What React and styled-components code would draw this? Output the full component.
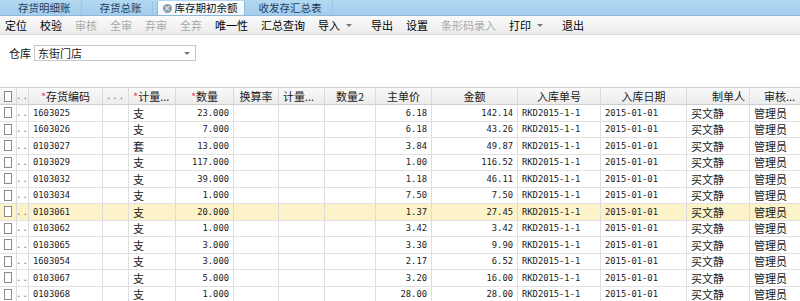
import React from "react";
import styled, { createGlobalStyle } from "styled-components";

const GlobalStyle = createGlobalStyle`
  html, body {
    margin: 0;
    padding: 0;
    background: #ffffff;
  }
  body {
    font-family: "Noto Sans CJK SC", "Noto Sans", sans-serif;
    font-size: 11px;
    color: #1a1a1a;
  }
`;

const tabs = [
  { label: "存货明细账" },
  { label: "存货总账" },
  { label: "库存期初余额", active: true },
  { label: "收发存汇总表" },
];

const tools = [
  { label: "定位" },
  { label: "校验" },
  { label: "审核", off: true },
  { label: "全审", off: true },
  { label: "弃审", off: true },
  { label: "全弃", off: true },
  { label: "唯一性" },
  { label: "汇总查询" },
  { label: "导入", menu: true },
  { label: "导出" },
  { label: "设置" },
  { label: "条形码录入", off: true },
  { label: "打印", menu: true },
  { label: "退出" },
];

// width, align of each column
const cols = [
  { w: 17, a: "center" },
  { w: 12, a: "center" },
  { w: 74, a: "left" },
  { w: 26, a: "center" },
  { w: 47, a: "left" },
  { w: 58, a: "right" },
  { w: 45, a: "center" },
  { w: 46, a: "left" },
  { w: 51, a: "center" },
  { w: 56, a: "right" },
  { w: 86, a: "right" },
  { w: 83, a: "left" },
  { w: 86, a: "left" },
  { w: 63, a: "left" },
  { w: 60, a: "left" },
];

const gridCols = cols.map((c) => c.w + "px").join(" ");

const heads = [
  { t: "chk" },
  { t: ".." },
  { t: "存货编码", req: true, a: "center" },
  { t: "..." },
  { t: "计量...", req: true, a: "left" },
  { t: "数量", req: true, a: "center" },
  { t: "换算率", a: "center" },
  { t: "计量...", a: "left" },
  { t: "数量2", a: "center" },
  { t: "主单价", a: "center" },
  { t: "金额", a: "center" },
  { t: "入库单号", a: "center" },
  { t: "入库日期", a: "center" },
  { t: "制单人", a: "right" },
  { t: "审核...", a: "center" },
];

const rows = [
  ["1603025", "支", "23.000", "6.18", "142.14"],
  ["1603026", "支", "7.000", "6.18", "43.26"],
  ["0103027", "套", "13.000", "3.84", "49.87"],
  ["0103029", "支", "117.000", "1.00", "116.52"],
  ["0103032", "支", "39.000", "1.18", "46.11"],
  ["0103034", "支", "1.000", "7.50", "7.50"],
  ["0103061", "支", "20.000", "1.37", "27.45", true],
  ["0103062", "支", "1.000", "3.42", "3.42"],
  ["0103065", "支", "3.000", "3.30", "9.90"],
  ["1603054", "支", "3.000", "2.17", "6.52"],
  ["0103067", "支", "5.000", "3.20", "16.00"],
  ["0103068", "支", "1.000", "28.00", "28.00"],
];

const Page = styled.div`
  width: 800px;
  height: 301px;
  overflow: hidden;
  background: #ffffff;
`;

const TabBar = styled.div`
  height: 15px;
  display: flex;
  align-items: flex-end;
  background: linear-gradient(#b3d8f2, #a3cdeb);
  border-bottom: 1px solid #8fb8d8;
  padding-left: 4px;
`;

const Tab = styled.div`
  height: 14px;
  display: flex;
  align-items: center;
  gap: 3px;
  padding: 0 ${(p) => (p.$active ? "6px" : "10px")} 0 ${(p) => (p.$active ? "5px" : "14px")};
  margin-right: ${(p) => (p.$active ? "0" : "4px")};
  font-size: 10.5px;
  line-height: 14px;
  color: ${(p) => (p.$active ? "#111" : "#1e3c5c")};
  background: ${(p) => (p.$active ? "linear-gradient(#ffffff, #eef5fb)" : "transparent")};
  border-right: 1px solid ${(p) => (p.$active ? "#8fb8d8" : "#9cc3e0")};
  border-left: ${(p) => (p.$active ? "1px solid #8fb8d8" : "none")};
`;

const CloseDot = styled.span`
  width: 9px;
  height: 9px;
  border-radius: 50%;
  background: #8b9bab;
  color: #fff;
  font-size: 8px;
  line-height: 9px;
  text-align: center;
  font-family: "DejaVu Sans", sans-serif;
`;

const Toolbar = styled.div`
  height: 18px;
  display: flex;
  align-items: center;
  gap: 13px;
  padding-left: 5px;
  background: linear-gradient(#fbfbfb, #ececec);
  border-bottom: 1px solid #dadada;
`;

const Tool = styled.span`
  display: flex;
  align-items: center;
  font-size: 11px;
  color: ${(p) => (p.$off ? "#a9a9a9" : "#000")};
  margin-right: ${(p) => (p.$menu ? "6px" : "0")};
`;

const Caret = styled.span`
  margin-left: 6px;
  width: 0;
  height: 0;
  border-left: 3px solid transparent;
  border-right: 3px solid transparent;
  border-top: 3px solid #777;
`;

const FilterRow = styled.div`
  display: flex;
  align-items: center;
  gap: 3px;
  padding: 10px 0 0 9px;
`;

const Label = styled.span`
  font-size: 11px;
  color: #111;
`;

const Combo = styled.div`
  width: 162px;
  height: 16px;
  border: 1px solid #c6c6c6;
  display: flex;
  align-items: center;
  justify-content: space-between;
  padding: 0 5px 0 3px;
  box-sizing: border-box;
  font-size: 11px;
  background: #fff;
`;

const Grid = styled.div`
  margin-top: 26px;
  width: 810px;
  border-top: 1px solid #cfcfcf;
`;

const HeadRow = styled.div`
  display: grid;
  grid-template-columns: ${gridCols};
  height: 16px;
  background: linear-gradient(#f9f9f9, #ececec);
  border-bottom: 1px solid #cfcfcf;
`;

const HeadCell = styled.div`
  display: flex;
  align-items: center;
  justify-content: ${(p) =>
    p.$a === "left" ? "flex-start" : p.$a === "right" ? "flex-end" : "center"};
  padding: 0 4px;
  font-size: 11px;
  color: #1a1a1a;
  border-right: 1px solid #dadada;
  white-space: nowrap;
  overflow: hidden;
`;

const Req = styled.span`
  color: #e8396b;
`;

const Dots = styled.span`
  color: #666;
  letter-spacing: 1px;
  font-family: "DejaVu Sans Mono", monospace;
  font-size: 9px;
`;

const Row = styled.div`
  display: grid;
  grid-template-columns: ${gridCols};
  height: 16.5px;
  box-sizing: border-box;
  background: ${(p) => (p.$hl ? "#fcf3c9" : "#ffffff")};
  border-bottom: 1px solid #e1e1e1;
`;

const Cell = styled.div`
  display: flex;
  align-items: center;
  justify-content: ${(p) =>
    p.$a === "left" ? "flex-start" : p.$a === "right" ? "flex-end" : "center"};
  padding: 0 4px;
  border-right: 1px solid #dedede;
  white-space: nowrap;
  overflow: hidden;
  font-size: ${(p) => (p.$mono ? "8.8px" : "11px")};
  font-family: ${(p) =>
    p.$mono
      ? '"DejaVu Sans Mono", "Liberation Mono", monospace'
      : '"Noto Sans CJK SC", sans-serif'};
  color: #1a1a1a;
`;

const Box = styled.span`
  width: 9px;
  height: 9px;
  border: 1px solid #8a8a8a;
  background: #fff;
`;

const App = () => {
  return (
    <>
      <GlobalStyle />
      <Page>
        <TabBar>
          {tabs.map((t) => (
            <Tab key={t.label} $active={t.active}>
              {t.active && <CloseDot>×</CloseDot>}
              {t.label}
            </Tab>
          ))}
        </TabBar>
        <Toolbar>
          {tools.map((t) => (
            <Tool key={t.label} $off={t.off} $menu={t.menu}>
              {t.label}
              {t.menu && <Caret />}
            </Tool>
          ))}
        </Toolbar>
        <FilterRow>
          <Label>仓库</Label>
          <Combo>
            东街门店
            <Caret />
          </Combo>
        </FilterRow>
        <Grid>
          <HeadRow>
            {heads.map((h, i) => (
              <HeadCell key={i} $a={h.a || "center"}>
                {h.t === "chk" ? (
                  <Box />
                ) : h.t.startsWith("..") ? (
                  <Dots>{h.t}</Dots>
                ) : (
                  <>
                    {h.req && <Req>*</Req>}
                    {h.t}
                  </>
                )}
              </HeadCell>
            ))}
          </HeadRow>
          {rows.map((r) => (
            <Row key={r[0]} $hl={r[5]}>
              <Cell $a="center">
                <Box />
              </Cell>
              <Cell $a="center">
                <Dots>..</Dots>
              </Cell>
              <Cell $a="left" $mono>
                {r[0]}
              </Cell>
              <Cell />
              <Cell $a="left">{r[1]}</Cell>
              <Cell $a="right" $mono>
                {r[2]}
              </Cell>
              <Cell />
              <Cell />
              <Cell />
              <Cell $a="right" $mono>
                {r[3]}
              </Cell>
              <Cell $a="right" $mono>
                {r[4]}
              </Cell>
              <Cell $a="left" $mono>
                RKD2015-1-1
              </Cell>
              <Cell $a="left" $mono>
                2015-01-01
              </Cell>
              <Cell $a="left">买文静</Cell>
              <Cell $a="left">管理员</Cell>
            </Row>
          ))}
        </Grid>
      </Page>
    </>
  );
};

export default App;
